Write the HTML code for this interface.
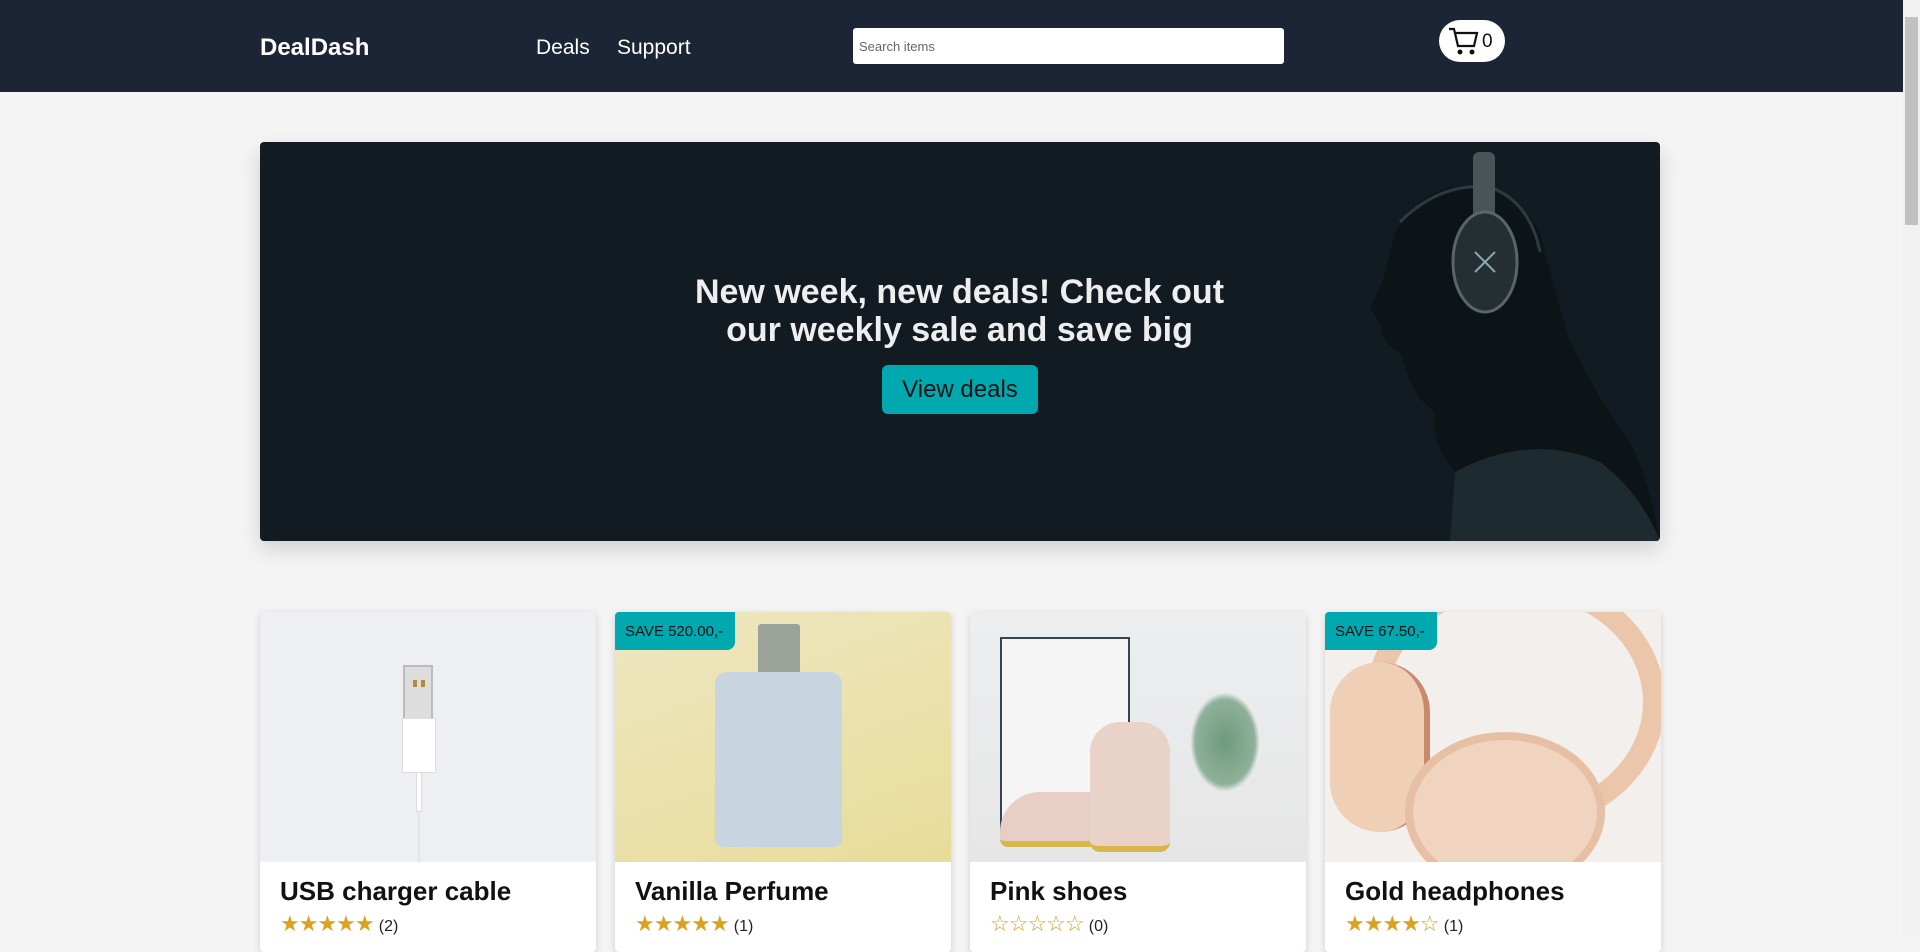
<!DOCTYPE html>
<html><head><meta charset="utf-8"><style>
*{box-sizing:border-box;margin:0;padding:0}
html,body{width:1920px;height:937px;overflow:hidden;background:#f4f4f4;font-family:"Liberation Sans",sans-serif}
.hdr{position:absolute;left:0;top:0;width:1903px;height:92px;background:#1b2535}
.logo{position:absolute;left:260px;top:34px;color:#fff;font-weight:bold;font-size:24px}
.nav{position:absolute;top:36px;color:#fff;font-size:21px}
.search{position:absolute;left:853px;top:28px;width:431px;height:36px;background:#fff;border-radius:3px;font-size:13px;color:#666;padding:11px 6px}
.cart{position:absolute;left:1439px;top:20px;width:66px;height:42px;background:#fff;border-radius:21px}
.cart span{position:absolute;left:43px;top:11px;font-size:19px;color:#111}
.sb{position:absolute;left:1903px;top:0;width:17px;height:937px;background:#f1f1f1}
.sb div{position:absolute;left:2px;top:17px;width:13px;height:208px;background:#c1c1c1}
.hero{position:absolute;left:260px;top:142px;width:1400px;height:399px;background:#121a22;border-radius:4px;box-shadow:0 8px 20px rgba(0,0,0,.15);overflow:hidden}
.ht{position:absolute;left:0;width:1400px;top:131px;text-align:center;color:#eee;font-weight:bold;font-size:34px;line-height:38px;padding-right:1px}
.btn{position:absolute;left:622px;top:223px;width:156px;height:49px;background:#00a8b0;border-radius:6px;color:#111;font-size:24px;text-align:center;line-height:49px}
.card{position:absolute;top:612px;width:336px;height:340px;background:#fff;border-radius:4px;box-shadow:0 2px 8px rgba(0,0,0,.15);overflow:hidden}
.img{position:absolute;left:0;top:0;width:336px;height:250px;overflow:hidden}
.t{position:absolute;left:20px;top:264px;font-size:26px;font-weight:bold;color:#111}
.st{position:absolute;left:20px;top:299px;font-size:22px;color:#d9a21f;letter-spacing:-1px}
.st small{font-size:16px;color:#222;letter-spacing:0}
.badge{position:absolute;left:0;top:0;width:120px;height:38px;background:#00a8b0;border-radius:0 0 8px 0;color:#111;font-size:15px;padding:11px 10px}
</style></head><body>
<div class="hdr">
<div class="logo">DealDash</div>
<div class="nav" style="left:536px">Deals</div>
<div class="nav" style="left:617px">Support</div>
<div class="search">Search items</div>
<div class="cart"><svg width="36" height="34" viewBox="0 0 36 34" style="position:absolute;left:8px;top:4px"><path d="M2 5h5l4 17h16l3-13H9" fill="none" stroke="#111" stroke-width="2.2"/><circle cx="13" cy="28" r="2.5" fill="#111"/><circle cx="25" cy="28" r="2.5" fill="#111"/></svg><span>0</span></div>
</div>
<div class="sb"><div></div></div>
<div class="hero">
<svg width="320" height="399" viewBox="0 0 320 399" style="position:absolute;left:1080px;top:0">
<path d="M110 399 L115 330 Q90 300 95 270 Q80 260 70 240 L60 210 Q40 200 42 185 L30 165 Q45 140 50 110 Q60 60 110 45 Q170 40 200 90 Q215 150 230 200 Q260 260 290 300 Q310 340 320 399Z" fill="#0d1418"/>
<path d="M60 80 Q100 40 150 45 Q190 60 200 110" fill="none" stroke="#2e3a42" stroke-width="3"/>
<rect x="133" y="10" width="22" height="70" rx="6" fill="#4a5358"/>
<ellipse cx="145" cy="120" rx="32" ry="50" fill="#252e33" stroke="#5a6569" stroke-width="3"/>
<path d="M135 110l20 20M155 110l-20 20" stroke="#8aa" stroke-width="2"/>
<path d="M115 330 Q190 290 260 320 Q300 350 320 399 L110 399Z" fill="#1d2a30"/>
</svg>
<div class="ht">New week, new deals! Check out<br>our weekly sale and save big</div>
<div class="btn">View deals</div>
</div>

<div class="card" style="left:260px"><div class="img" style="background:#eeeff2">
<div style="position:absolute;left:143px;top:53px;width:30px;height:55px;background:#ddd;border:2px solid #bbb"></div>
<div style="position:absolute;left:153px;top:68px;width:4px;height:7px;background:#b58a3a"></div><div style="position:absolute;left:161px;top:68px;width:4px;height:7px;background:#b58a3a"></div>
<div style="position:absolute;left:142px;top:106px;width:34px;height:55px;background:#fff;border:1px solid #ddd"></div>
<div style="position:absolute;left:156px;top:160px;width:6px;height:40px;background:#fff;border:1px solid #ddd"></div>
<div style="position:absolute;left:158px;top:200px;width:2px;height:50px;background:#e4e4e4"></div>
</div><div class="t">USB charger cable</div><div class="st">★★★★★ <small>(2)</small></div></div>

<div class="card" style="left:615px"><div class="img" style="background:linear-gradient(160deg,#eee7c0,#e8dc9a)">
<div style="position:absolute;left:143px;top:12px;width:42px;height:50px;background:#9aa39a;border-radius:3px"></div>
<div style="position:absolute;left:100px;top:60px;width:127px;height:175px;background:#c8d4e0;border-radius:12px 12px 8px 8px"></div>
</div><div class="badge">SAVE 520.00,-</div><div class="t">Vanilla Perfume</div><div class="st">★★★★★ <small>(1)</small></div></div>

<div class="card" style="left:970px"><div class="img" style="background:linear-gradient(#eceef0,#e6e6e6)">
<div style="position:absolute;left:30px;top:25px;width:130px;height:200px;background:#f5f5f5;border:2px solid #345"></div>
<div style="position:absolute;left:30px;top:180px;width:110px;height:55px;background:#e8cfc6;border-radius:40px 20px 8px 8px;border-bottom:6px solid #d8b64a"></div>
<div style="position:absolute;left:120px;top:110px;width:80px;height:130px;background:#e9d2c8;border-radius:30px 30px 10px 10px;border-bottom:6px solid #d8b64a"></div>
<div style="position:absolute;left:220px;top:80px;width:70px;height:100px;background:radial-gradient(#6f9a7c,#8fb09a 60%,transparent 70%)"></div>
</div><div class="t">Pink shoes</div><div class="st">☆☆☆☆☆ <small>(0)</small></div></div>

<div class="card" style="left:1325px"><div class="img" style="background:#f3efec">
<div style="position:absolute;left:40px;top:-40px;width:300px;height:260px;border:22px solid #ecc6aa;border-radius:50%"></div>
<div style="position:absolute;left:5px;top:50px;width:100px;height:170px;background:#efcfb6;border-radius:50px;border-right:6px solid #c88a6a"></div>
<div style="position:absolute;left:80px;top:120px;width:200px;height:160px;background:#f0d4bf;border-radius:50%;border:8px solid #e6bfa4"></div>
</div><div class="badge" style="width:112px">SAVE 67.50,-</div><div class="t">Gold headphones</div><div class="st">★★★★☆ <small>(1)</small></div></div>
</body></html>
